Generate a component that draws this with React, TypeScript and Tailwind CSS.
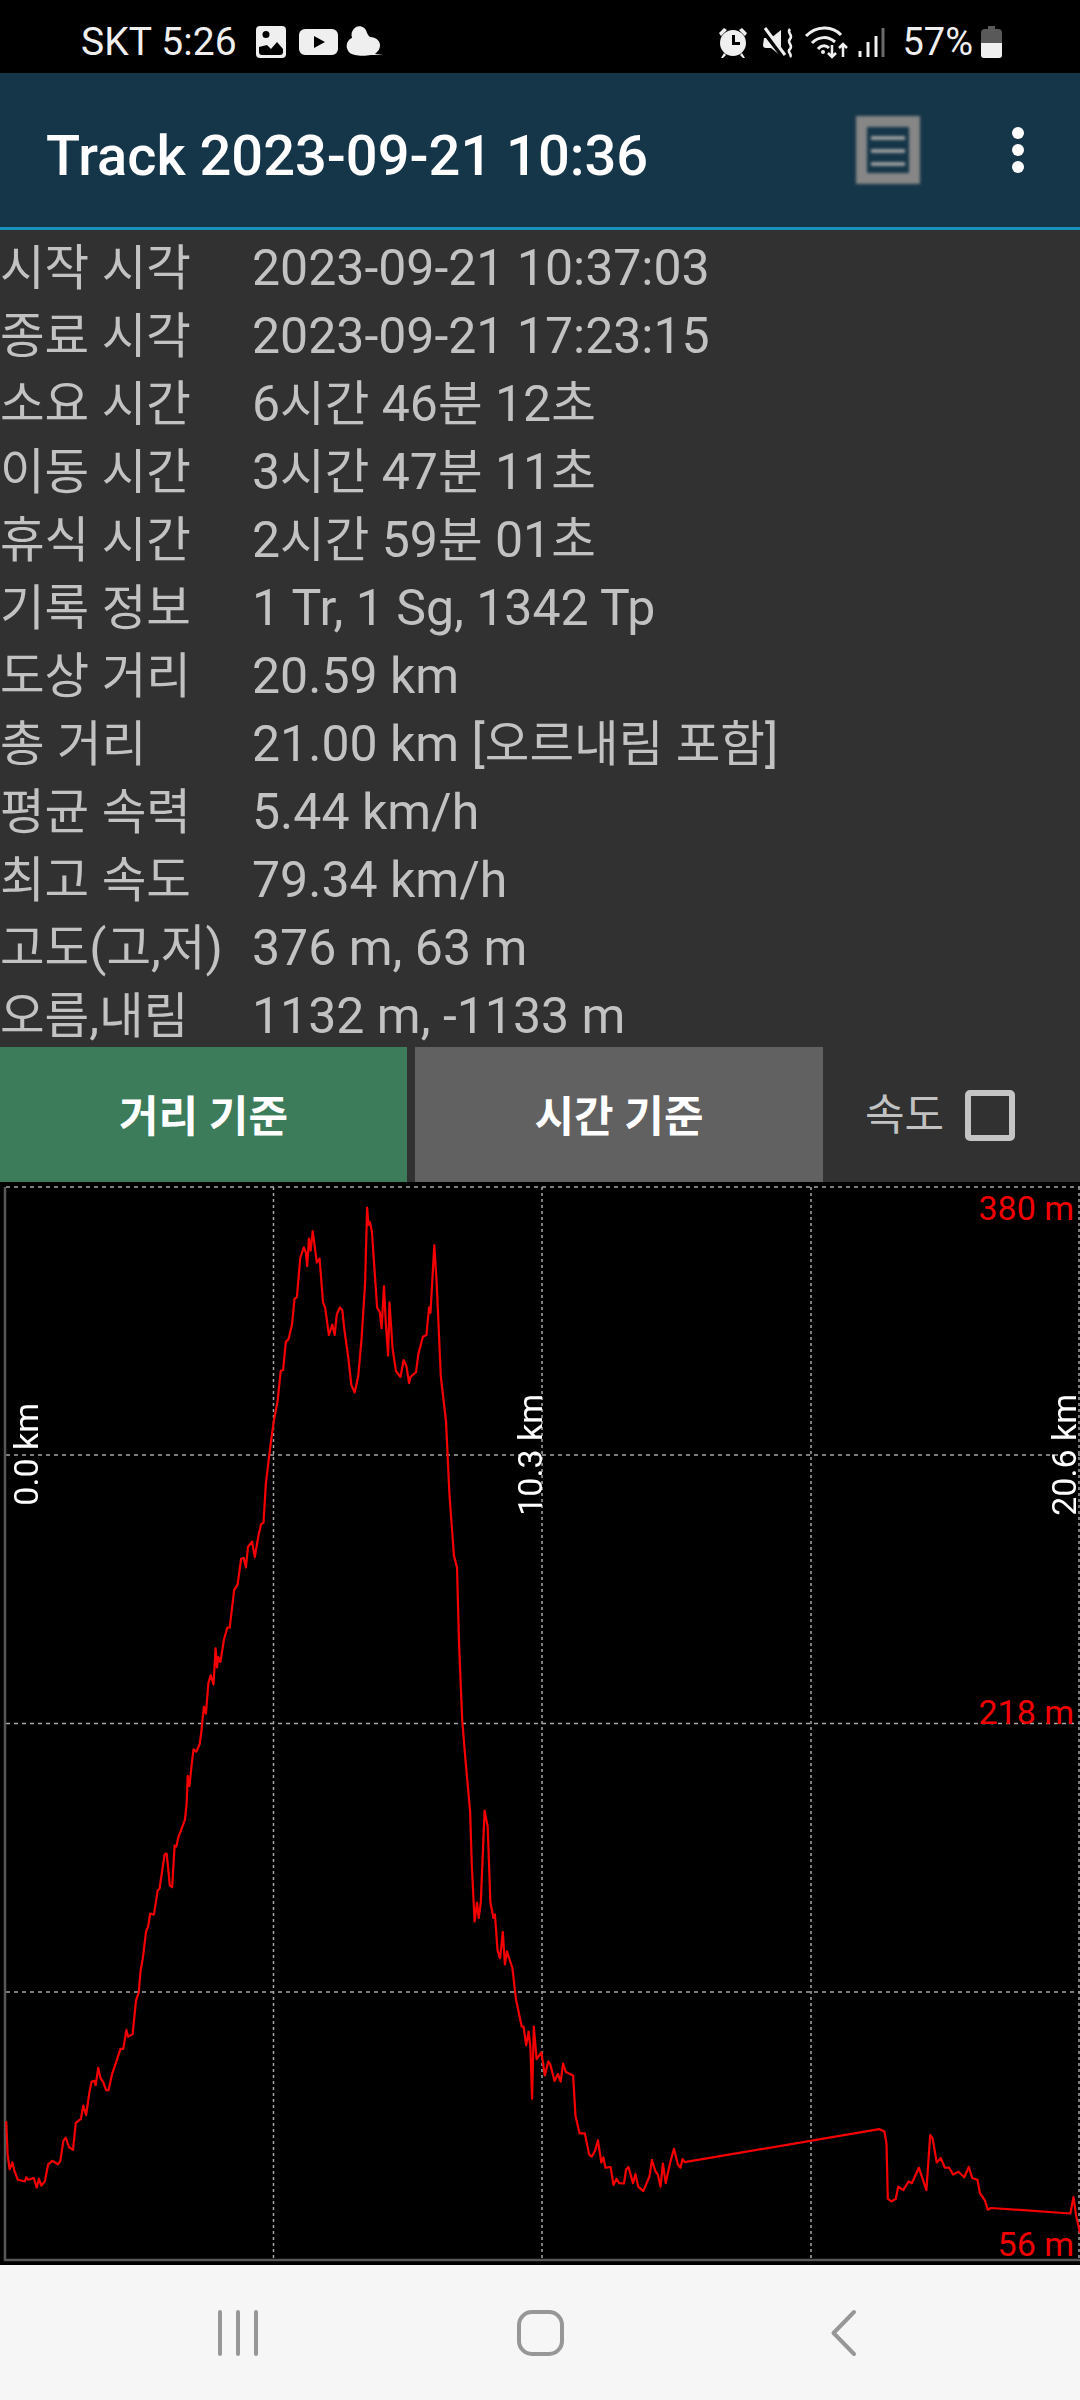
import React from 'react';

const FONT = "Roboto, 'Noto Sans CJK KR', sans-serif";

const rows = [
  ['시작 시각', '2023-09-21 10:37:03'],
  ['종료 시각', '2023-09-21 17:23:15'],
  ['소요 시간', '6시간 46분 12초'],
  ['이동 시간', '3시간 47분 11초'],
  ['휴식 시간', '2시간 59분 01초'],
  ['기록 정보', '1 Tr, 1 Sg, 1342 Tp'],
  ['도상 거리', '20.59 km'],
  ['총 거리', '21.00 km [오르내림 포함]'],
  ['평균 속력', '5.44 km/h'],
  ['최고 속도', '79.34 km/h'],
  ['고도(고,저)', '376 m, 63 m'],
  ['오름,내림', '1132 m, -1133 m'],
];

// trace points read off the zoomed reference, per crop (scale 1568/540)
const lowerLeft = [[18,1165],[22,1260],[28,1305],[36,1285],[42,1310],[52,1335],[72,1340],[76,1328],[82,1335],[98,1330],[107,1358],[113,1332],[120,1352],[130,1340],[140,1290],[152,1280],[168,1290],[175,1280],[184,1222],[191,1213],[200,1240],[212,1248],[220,1170],[235,1158],[242,1120],[250,1147],[260,1080],[266,1050],[274,1048],[278,1060],[285,1010],[292,1040],[300,1052],[308,1075],[315,1075],[325,1030],[335,1000],[350,955],[358,955],[367,900],[372,920],[385,912],[395,815],[403,790],[408,730],[415,690],[424,615],[430,600],[436,562],[447,565],[458,495],[463,490],[478,390],[484,388],[493,480],[500,485],[507,365],[512,368],[518,340],[525,322],[537,290],[542,240],[545,162],[550,192],[556,135],[562,85],[570,92],[580,70],[585,30]];
const upper = [[588,1568],[592,1530],[598,1550],[605,1460],[612,1438],[620,1465],[626,1360],[630,1415],[634,1385],[640,1400],[650,1335],[660,1300],[667,1300],[680,1190],[690,1175],[700,1100],[708,1098],[714,1125],[720,1065],[732,1050],[740,1095],[750,1035],[758,1000],[765,995],[772,880],[785,775],[795,700],[806,642],[815,555],[822,552],[830,470],[838,462],[848,420],[855,345],[862,340],[872,225],[882,196],[888,210],[892,250],[897,170],[902,205],[908,148],[914,195],[920,240],[928,228],[938,355],[944,370],[955,450],[965,420],[972,450],[978,390],[987,370],[994,378],[1000,435],[1012,520],[1020,595],[1030,617],[1040,570],[1050,460],[1060,300],[1066,80],[1070,130],[1074,122],[1080,150],[1095,370],[1103,385],[1108,430],[1115,308],[1120,410],[1127,510],[1131,355],[1140,490],[1150,555],[1163,572],[1172,523],[1180,540],[1188,590],[1192,572],[1208,558],[1215,505],[1228,455],[1238,450],[1246,370],[1250,385],[1261,190],[1268,300],[1280,570],[1295,700],[1305,910],[1318,1090],[1327,1125],[1333,1350],[1342,1568]];
const lowerMid = [[1352,120],[1365,265],[1370,420],[1378,585],[1385,530],[1390,575],[1396,530],[1407,263],[1416,310],[1424,530],[1433,575],[1437,565],[1445,670],[1452,692],[1460,615],[1466,710],[1472,672],[1488,720],[1498,810],[1515,890],[1520,890],[1528,945],[1535,905],[1540,950],[1545,1100],[1550,890],[1558,985]];
const lowerRight = [[4,965],[14,1032],[24,992],[30,1000],[42,1048],[52,1028],[60,1050],[67,998],[75,1022],[96,1032],[103,1150],[115,1200],[130,1200],[143,1262],[150,1268],[160,1250],[168,1220],[178,1285],[184,1270],[190,1300],[205,1298],[213,1350],[222,1332],[230,1345],[244,1346],[250,1305],[257,1298],[270,1345],[277,1318],[285,1355],[300,1368],[318,1325],[325,1278],[335,1310],[342,1320],[350,1355],[357,1288],[365,1345],[378,1285],[389,1245],[400,1290],[408,1300],[414,1275],[420,1284],[985,1188],[1000,1195],[1006,1230],[1010,1390],[1020,1398],[1033,1390],[1040,1355],[1055,1365],[1070,1340],[1080,1345],[1100,1300],[1122,1365],[1133,1205],[1140,1215],[1152,1285],[1164,1272],[1175,1300],[1188,1300],[1200,1320],[1215,1312],[1232,1328],[1245,1298],[1255,1330],[1270,1335],[1278,1375],[1292,1395],[1300,1422],[1310,1417],[1540,1433],[1549,1385],[1557,1440],[1568,1490]];

const S = 540 / 1568;
const toPts = (list: number[][], ox: number, oy: number) =>
  list.map(([x, y]) => `${(ox + x * S).toFixed(1)},${(oy + y * S).toFixed(1)}`).join(' ');

const trace = [toPts(lowerLeft, 0, 1720), toPts(upper, 0, 1180), toPts(lowerMid, 0, 1720), toPts(lowerRight, 540, 1720)].join(' ');

// hangul runs slightly narrower than the Noto default, as on the device font
function Ko({ text }: { text: string }) {
  const parts = text.split(/([가-힣]+)/);
  return (
    <>
      {parts.map((p, i) =>
        i % 2 === 1 ? (
          <span key={i} className="text-[48.5px]">
            {p}
          </span>
        ) : (
          p
        )
      )}
    </>
  );
}

function StatusBar() {
  return (
    <div className="h-[73px] bg-black flex items-center justify-between text-[#efefef] pl-[81px] pr-[78px] pt-[11px]">
      <div className="flex items-center">
        <span className="text-[39px] leading-none tracking-[0.1px]">SKT 5:26</span>
        <svg className="ml-[18px]" width="130" height="34" viewBox="0 0 130 34" fill="#efefef">
          <path fillRule="evenodd" d="M5 1h22a4 4 0 0 1 4 4v24a4 4 0 0 1-4 4H5a4 4 0 0 1-4-4V5a4 4 0 0 1 4-4zM11 6a3.5 3.5 0 1 0 0 7 3.500 3.500 0 0 0 0-7zM4 22v5a3 3 0 0 0 3 3h18a3 3 0 0 0 3-3v-3l-6-7-6 7-4-4z" />
          <path fillRule="evenodd" d="M50 4h27a6 6 0 0 1 6 6v14a6 6 0 0 1-6 6H50a6 6 0 0 1-6-6V10a6 6 0 0 1 6-6zM59 11v12l11-6z" />
          <path d="M100 30a9 9 0 0 1-6-15c1-1 2-2 3-2a10 10 0 0 1 4-11c5-2 10 1 11 6 1 2 2 3 3 4 6 0 10 4 10 8 0 5-3 7-5 9l8 1h-12c-5 1-12 1-16 0z" />
        </svg>
      </div>
      <div className="flex items-center">
        <svg width="76" height="34" viewBox="0 0 76 34" fill="#efefef">
          <path fillRule="evenodd" d="M15 5a13 13 0 1 1 0 26 13 13 0 0 1 0-26zM14 10v10h8v-3h-5v-7z" />
          <path d="M1 8l5-5 3 2-6 6zM29 8l-5-5-3 2 6 6zM3 33l3-5 2 2-3 3zM27 33l-3-5-2 2 3 3z" />
          <path d="M46 13h7l10-8v26l-10-8h-5a3 3 0 0 1-3-3z" />
          <path d="M44 3L68 34" stroke="#000" strokeWidth="6" />
          <path d="M47 3L67 30" stroke="#efefef" strokeWidth="3" />
          <path d="M72 4c-4 4 4 6 0 10c-4 4 4 6 0 10c-4 3 3 5 0 8" fill="none" stroke="#efefef" strokeWidth="2.5" />
        </svg>
        <svg className="ml-[10px]" width="82" height="34" viewBox="0 0 82 34" fill="none" stroke="#efefef" strokeWidth="3">
          <path d="M2 11C12 1 28 0 37 10" />
          <path d="M8 18C15 11 24 11 31 17" />
          <path d="M14 24C17 20 22 20 25 23" />
          <circle cx="19" cy="27" r="2" fill="#efefef" stroke="none" />
          <path d="M28 20V32M24 28l4 4 4-4M39 32V19M35 23l4-4 4 4" strokeWidth="2.5" />
          <path d="M56 32v-6M64 32V17M72 32V11" strokeWidth="3" />
          <path d="M79 32V3" strokeWidth="3" stroke="#6b6b6b" />
        </svg>
        <span className="ml-[16px] text-[38px] leading-none">57%</span>
        <svg className="ml-[8px]" width="21" height="32" viewBox="0 0 21 32">
          <path d="M7 0h7v3h3a4 4 0 0 1 4 4v10H0V7a4 4 0 0 1 4-4h3z" fill="#595959" />
          <path d="M0 17h21v12a3 3 0 0 1-3 3H3a3 3 0 0 1-3-3z" fill="#efefef" />
        </svg>
      </div>
    </div>
  );
}

function AppBar() {
  return (
    <div className="h-[157px] bg-[#153548] border-b-[3px] border-[#1792bb] flex items-center pl-[46px]">
      <span className="text-[56px] leading-none font-medium text-white flex-1 mt-[11px]">Track 2023-09-21 10:36</span>
      <svg className="mr-[92px] blur-[1.5px]" width="64" height="68" viewBox="0 0 64 68">
        <rect width="64" height="68" fill="#868686" />
        <rect x="11" y="11" width="42" height="46" fill="#153548" />
        <path d="M15 22h34M15 35h34M15 48h34" stroke="#a8a8a8" strokeWidth="3.500" />
      </svg>
      <div className="flex flex-col gap-[5px] mr-[56px]">
        <div className="w-[12px] h-[12px] rounded-full bg-white" />
        <div className="w-[12px] h-[12px] rounded-full bg-white" />
        <div className="w-[12px] h-[12px] rounded-full bg-white" />
      </div>
    </div>
  );
}

function Chart() {
  const line = { stroke: '#a6a6a6', strokeWidth: 1.5, fill: 'none' };
  return (
    <div className="relative h-[1083px] bg-black overflow-hidden">
      <svg className="absolute inset-0" width="1080" height="1083" viewBox="0 1182 1080 1083">
        <path d="M6 1187H1080M6 1455H1080M6 1723.500H1080M6 1992H1080" {...line} strokeDasharray="4 4" />
        <path d="M273.500 1187V2259M542 1187V2259M811 1187V2259M1079 1187V2259" {...line} strokeDasharray="3 3" />
        <path d="M5 1187V2260H1080" stroke="#575757" strokeWidth="2.500" fill="none" />
        <polyline points={trace} fill="none" stroke="#f40000" strokeWidth="2.200" strokeLinejoin="round" />
      </svg>
      <span className="absolute left-[7px] top-[221px] text-[34px] leading-[38px] text-white [writing-mode:vertical-lr] rotate-180">0.0 km</span>
      <span className="absolute left-[511px] top-[212px] text-[34px] leading-[38px] text-white [writing-mode:vertical-lr] rotate-180">10.3 km</span>
      <span className="absolute left-[1048px] top-[212px] text-[34px] leading-[32px] text-white [writing-mode:vertical-lr] rotate-180">20.6 km</span>
      <span className="absolute right-[6px] top-[6px] text-[34px] leading-[40px] text-[#f00000]">380 m</span>
      <span className="absolute right-[6px] top-[510px] text-[34px] leading-[40px] text-[#f00000]">218 m</span>
      <span className="absolute right-[6px] top-[1042px] text-[34px] leading-[40px] text-[#f00000]">56 m</span>
    </div>
  );
}

function NavBar() {
  return (
    <div className="h-[135px] bg-[#f6f6f6] flex items-start justify-center">
      <svg className="mt-[44px]" width="1080" height="50" viewBox="0 0 1080 50" fill="none" stroke="#979797">
        <path d="M220 3V45M238 3V45M256 3V45" strokeWidth="4" strokeLinecap="round" />
        <rect x="519" y="3" width="43" height="42" rx="13" strokeWidth="4" />
        <path d="M854 3L833.500 24L854 45" strokeWidth="4" strokeLinecap="round" strokeLinejoin="round" />
      </svg>
    </div>
  );
}

export default function App() {
  return (
    <div className="w-[1080px] h-[2400px] overflow-hidden bg-[#313131]" style={{ fontFamily: FONT }}>
      <StatusBar />
      <AppBar />
      <div className="h-[817px] pt-[4px]">
        {rows.map(([label, value]) => (
          <div key={label} className="flex h-[68px] items-center text-[50px] leading-[68px] text-[#c2c2c2] whitespace-nowrap">
            <span className="w-[252px]"><Ko text={label} /></span>
            <span><Ko text={value} /></span>
          </div>
        ))}
      </div>
      <div className="flex h-[135px]">
        <div className="w-[407px] bg-[#3c7c5a] flex items-center justify-center pt-[5px] text-[43px] font-bold text-white">거리 기준</div>
        <div className="w-[408px] ml-[8px] bg-[#616161] flex items-center justify-center pt-[5px] text-[43px] font-bold text-white">시간 기준</div>
        <div className="flex items-center pl-[42px] pt-[2px]">
          <span className="text-[43px] text-[#c2c2c2]">속도</span>
          <div className="ml-[21px] w-[50px] h-[51px] rounded-[5px] border-[6px] border-[#c4c4c4]" />
        </div>
      </div>
      <Chart />
      <NavBar />
    </div>
  );
}
